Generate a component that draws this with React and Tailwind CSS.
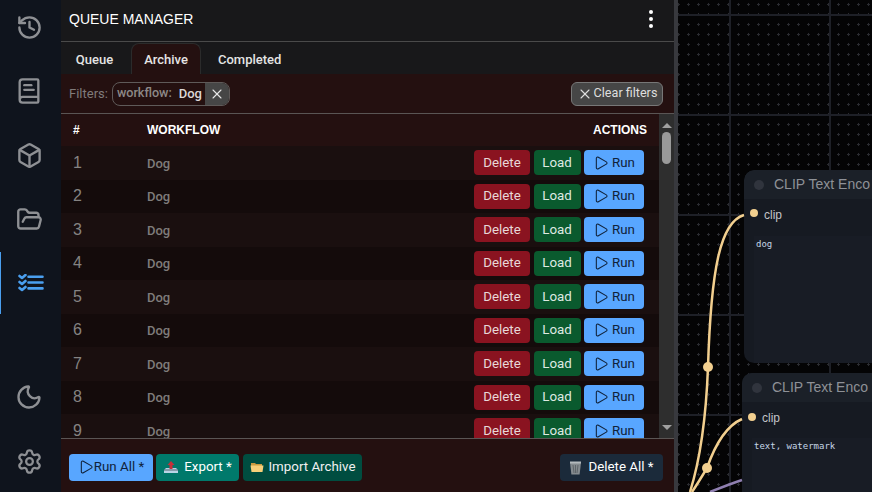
import { History, BookText, Box, FolderOpen, Moon, Settings, Play, X } from 'lucide-react'

const rows = [1, 2, 3, 4, 5, 6, 7, 8, 9]

// The queue icon: three check marks beside three bars.
function QueueIcon() {
  return (
    <svg className="ml-[3px]" width="26" height="18" viewBox="0 0 26 18" fill="none" stroke="#4a9fef" strokeLinecap="round">
      <path d="M1.5 2 l2.5 2 L7.5 1 M1.5 8 l2.5 2 L7.5 7 M1.5 14 l2.5 2 L7.5 13" strokeWidth="2.6" strokeLinejoin="round" />
      <path d="M10.5 2.7 H24.5 M10.5 8.5 H24.5 M10.5 14.4 H24.5" strokeWidth="2.6" />
    </svg>
  )
}

function SideItem({ children, active }) {
  return (
    <div className={`h-[64px] pr-[3px] flex items-center justify-center text-[#8e9094] ${active ? 'relative' : ''}`}>
      {active && <div className="absolute left-0 top-[1px] bottom-[1px] w-[1px] bg-[#4a9fef]" />}
      {children}
    </div>
  )
}

function Sidebar() {
  return (
    <div className="w-[61px] h-full shrink-0 bg-[#0f141d] flex flex-col justify-between overflow-hidden">
      <div className="mt-[-5px]">
        <SideItem><History size={27} strokeWidth={2.1} /></SideItem>
        <SideItem><BookText size={28} strokeWidth={2} /></SideItem>
        <SideItem><Box size={27} strokeWidth={2.1} /></SideItem>
        <SideItem><FolderOpen size={27} strokeWidth={2.1} /></SideItem>
        <SideItem active><QueueIcon /></SideItem>
      </div>
      <div className="mb-[-1px]">
        <SideItem><Moon size={28} strokeWidth={2} /></SideItem>
        <SideItem><Settings size={27} strokeWidth={2} /></SideItem>
      </div>
    </div>
  )
}

function RunIcon({ size = 16 }) {
  return <Play size={size} strokeWidth={1.6} className="text-[#10223a] shrink-0" />
}

function Row({ n }) {
  return (
    <div className={`h-[33.5px] shrink-0 flex items-center pl-[12px] pr-[15px] ${n % 2 ? 'bg-[#1a0f0f]' : 'bg-[#140b0b]'}`}>
      <div className="w-[74px] text-[16px] text-[#858382] font-['Liberation_Sans',sans-serif]">{n}</div>
      <div className="flex-1 pt-[1px] text-[13px] font-medium text-[#7f7c7b]">Dog</div>
      <div className="flex gap-[3.5px] text-[13.33px]">
        <button className="w-[56px] h-[25px] rounded-[4px] bg-[#8a1320] text-[#e8d8d8]">Delete</button>
        <button className="w-[47px] h-[25px] rounded-[4px] bg-[#0a5a2e] text-[#dfe9e2]">Load</button>
        <button className="w-[60px] h-[25px] rounded-[4px] bg-[#58a6ff] text-[#10223a] flex items-center justify-center gap-[3px]">
          <RunIcon />Run
        </button>
      </div>
    </div>
  )
}

function ScrollBar() {
  return (
    <div className="w-[15px] shrink-0 bg-[#2e2e2e] flex flex-col items-center">
      <div className="h-[18px] flex items-end justify-center pb-[4px]">
        <div className="w-0 h-0 border-x-[5px] border-x-transparent border-b-[5px] border-b-[#a0a0a0]" />
      </div>
      <div className="w-[9px] h-[32px] rounded-full bg-[#9a9a9a]" />
      <div className="flex-1" />
      <div className="h-[18px] flex items-start justify-center pt-[5px]">
        <div className="w-0 h-0 border-x-[5px] border-x-transparent border-t-[5px] border-t-[#a0a0a0]" />
      </div>
    </div>
  )
}

function ExportIcon() {
  return (
    <svg width="16" height="14" viewBox="0 0 16 14">
      <path d="M1 10 L3 8 H13 L15 10 V13 H1 Z" fill="#b9d4e6" />
      <path d="M1 10 H15" stroke="#51626e" strokeWidth="1" />
      <path d="M8 1 L11.5 5 H9.5 V9 H6.5 V5 H4.5 Z" fill="#c62f3a" />
    </svg>
  )
}

function FolderIcon() {
  return (
    <svg width="14" height="12" viewBox="0 0 14 12">
      <path d="M1 2 H5 L6 3 H12 V5 H1 Z" fill="#c99a3f" />
      <path d="M0.5 4.5 H13.5 L12.5 11 H1.5 Z" fill="#f7cf79" />
    </svg>
  )
}

function TrashIcon() {
  return (
    <svg width="13" height="15" viewBox="0 0 13 15">
      <path d="M1 2.5 H12 L10.6 14.5 H2.4 Z" fill="#858b8f" />
      <path d="M1 2.5 H12" stroke="#b4babd" strokeWidth="2" />
      <path d="M4 5 L5 13 M6.5 5 V13 M9 5 L8 13" stroke="#5f6569" strokeWidth="1" />
    </svg>
  )
}

function Panel() {
  return (
    <div className="w-[613px] h-full shrink-0 bg-[#18181a] flex flex-col font-['Roboto',sans-serif]">
      <div className="h-[42px] shrink-0 flex items-center justify-between pl-[8px] pr-[21px] pb-[3px] border-b border-[#4a4a4a]">
        <span className="text-[14px] text-white font-['Liberation_Sans',sans-serif]">QUEUE MANAGER</span>
        <div className="flex flex-col gap-[3px]">
          <div className="w-[4px] h-[4px] rounded-full bg-white" />
          <div className="w-[4px] h-[4px] rounded-full bg-white" />
          <div className="w-[4px] h-[4px] rounded-full bg-white" />
        </div>
      </div>

      <div className="h-[32px] shrink-0 flex items-end text-[13px] font-medium text-[#e4e4e4]">
        <div className="h-[31px] w-[67px] flex items-center justify-center pt-[2px]">Queue</div>
        <div className="h-[31px] w-[70px] ml-[3px] flex items-center justify-center pt-[2px] rounded-t-[8px] bg-[#241010] border-x border-t border-[#2b2b2b]">Archive</div>
        <div className="h-[31px] pl-[17px] flex items-center pt-[2px]">Completed</div>
      </div>

      <div className="h-[40px] shrink-0 bg-[#241010] border-b border-[#5a5554] flex items-center justify-between pl-[8px] pr-[11px]">
        <div className="flex items-center gap-[4px] text-[13px]">
          <span className="text-[#807b7a]">Filters:</span>
          <div className="w-[118px] h-[24px] flex items-stretch rounded-[8px] border border-[#5f5a59] overflow-hidden">
            <div className="flex-1 flex items-center justify-between pl-[4px] pr-[3px]">
              <span className="font-medium text-[#8d8887] text-[12.6px]">workflow:</span>
              <span className="font-medium text-[#dcd8d7]">Dog</span>
            </div>
            <div className="w-[24px] shrink-0 bg-[#464646] flex items-center justify-center">
              <X size={16} strokeWidth={1.6} className="text-[#e5e5e5]" />
            </div>
          </div>
        </div>
        <div className="h-[24px] w-[92px] rounded-[6px] bg-[#464646] border border-[#777] flex items-center justify-center gap-[1px] text-[12.6px] text-[#dedede]">
          <X size={16} strokeWidth={1.6} className="shrink-0" />Clear filters
        </div>
      </div>

      <div className="flex-1 min-h-0 flex">
        <div className="flex-1 min-w-0 flex flex-col overflow-hidden">
          <div className="h-[32px] shrink-0 bg-[#241010] flex items-center pl-[12px] pr-[12px] text-[12px] font-bold text-white font-['Liberation_Sans',sans-serif]">
            <div className="w-[74px]">#</div>
            <div className="flex-1">WORKFLOW</div>
            <div>ACTIONS</div>
          </div>
          {rows.map((n) => <Row key={n} n={n} />)}
        </div>
        <ScrollBar />
      </div>

      <div className="h-[54px] shrink-0 bg-[#241010] border-t border-[#5a5554] flex items-center justify-between pl-[8px] pr-[11px] pt-[3px] text-[13.33px]">
        <div className="flex gap-[3px]">
          <button className="w-[84px] h-[27px] rounded-[4px] bg-[#58a6ff] text-[#10223a] flex items-center justify-center">
            <RunIcon />Run All *
          </button>
          <button className="w-[83px] h-[27px] rounded-[4px] bg-[#00796b] text-white flex items-center justify-center gap-[5px]">
            <ExportIcon />Export *
          </button>
          <button className="w-[119px] h-[27px] ml-[1px] rounded-[4px] bg-[#004d40] text-[#f0f0f0] flex items-center justify-center gap-[5px]">
            <FolderIcon />Import Archive
          </button>
        </div>
        <button className="w-[103px] h-[27px] rounded-[4px] bg-[#1b2a3a] text-white flex items-center justify-center gap-[6px]">
          <TrashIcon />Delete All *
        </button>
      </div>
    </div>
  )
}

function Node({ className, prompt, gap }) {
  return (
    <div className={`absolute w-[200px] rounded-[10px] bg-[#161a22] overflow-hidden ${className}`}>
      <div className="h-[29px] bg-[#1b2028] flex items-center pl-[10px] gap-[10px] whitespace-nowrap font-['Liberation_Sans',sans-serif]">
        <div className="w-[10px] h-[10px] shrink-0 rounded-full bg-[#30343d]" />
        <span className="text-[14px] text-[#8e9197]">CLIP Text Enco</span>
      </div>
      <div className={`flex items-center pl-[20px] text-[12px] text-[#c2c4c8] font-['Liberation_Sans',sans-serif] ${gap}`}>clip</div>
      <div className="ml-[10px] h-[200px] bg-[#181c25] pl-[2px] pt-[2px] text-[9px] text-[#c5d5e5] font-['DejaVu_Sans_Mono',monospace]">{prompt}</div>
    </div>
  )
}

function Canvas() {
  return (
    <div className="relative flex-1 h-full bg-[#040405] border-l-[4px] border-[#38393e] overflow-hidden">
      <svg className="absolute inset-0" width="194" height="492">
        <defs>
          <pattern id="dots" x="-4" y="0" width="10" height="10" patternUnits="userSpaceOnUse">
            <path d="M3 4.5 H6 M4.5 3 V6" stroke="#2a2b30" strokeWidth="1" />
          </pattern>
        </defs>
        <rect width="194" height="492" fill="url(#dots)" />
        <path d="M0 15 H194 M0 115 H194 M0 215 H194 M0 315 H194 M0 415 H194 M52 0 V492 M152 0 V492" stroke="#1e2027" strokeWidth="2" />
      </svg>
      <div className="absolute left-[66px] top-[170px] w-[200px] h-[193px] rounded-[10px] overflow-hidden">
        <Node className="left-0 top-0" prompt="dog" gap="h-[37px] pb-[5px]" />
      </div>
      <Node className="left-[64px] top-[373px]" prompt="text, watermark" gap="h-[36px] pb-[5px]" />
      <svg className="absolute inset-0" width="194" height="492" fill="none">
        <path d="M66 215 C42 222 33 270 30 367 C28 420 22 460 12 492" stroke="#f2cf8f" strokeWidth="2.5" />
        <path d="M64 419 C48 426 37 445 29 468 C23 478 18 486 14 492" stroke="#f2cf8f" strokeWidth="2.5" />
        <path d="M64 480 C52 484 42 488 32 492" stroke="#8f7fb0" strokeWidth="2.5" />
        <circle cx="30" cy="367" r="5" fill="#f2cf8f" />
        <circle cx="29" cy="468" r="5" fill="#f2cf8f" />
        <circle cx="76" cy="213" r="4" fill="#f2cf8f" />
        <circle cx="74" cy="417" r="4" fill="#f2cf8f" />
      </svg>
    </div>
  )
}

export default function App() {
  return (
    <div className="w-[872px] h-[492px] flex overflow-hidden bg-black">
      <Sidebar />
      <Panel />
      <Canvas />
    </div>
  )
}
